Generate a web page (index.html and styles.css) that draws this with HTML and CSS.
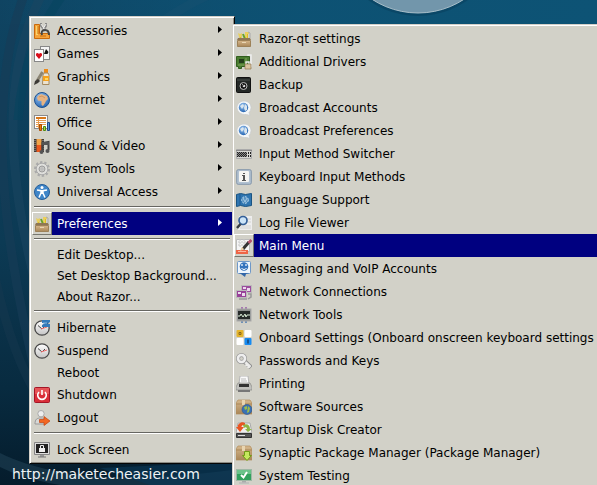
FILE: index.html
```
<!DOCTYPE html>
<html lang="en">
<head>
<meta charset="utf-8">
<title>Desktop menu</title>
<link rel="stylesheet" href="styles.css">
</head>
<body>
<svg class="defs" aria-hidden="true">
  <defs>
    <linearGradient id="sea" x1="0" y1="0" x2="0" y2="1"><stop offset="0" stop-color="#0f4462"/><stop offset=".5" stop-color="#0c3a54"/><stop offset=".8" stop-color="#082b40"/><stop offset="1" stop-color="#051c2c"/></linearGradient>
    <linearGradient id="glow" x1="0" y1="0" x2="1" y2="0"><stop offset="0" stop-color="#0b5a80" stop-opacity="0"/><stop offset=".5" stop-color="#0d5375" stop-opacity=".9"/><stop offset="1" stop-color="#0d5375"/></linearGradient>
    <linearGradient id="box" x1="0" y1="0" x2="0" y2="1"><stop offset="0" stop-color="#d6b78c"/><stop offset="1" stop-color="#a98658"/></linearGradient>
    <radialGradient id="blue" cx=".4" cy=".3" r=".75"><stop offset="0" stop-color="#9cc6f2"/><stop offset="1" stop-color="#1d5fae"/></radialGradient>
    <linearGradient id="pale" x1="0" y1="0" x2="0" y2="1"><stop offset="0" stop-color="#fff"/><stop offset="1" stop-color="#c4c4c4"/></linearGradient>
  </defs>
  <symbol id="accessories" viewBox="0 0 16 16"><path d="M.5 1.500h5v9h10v5H.5z" fill="#f5a33b" stroke="#c96a0c"/><path d="M2 3h2v9H2z" fill="#fbd36b"/><path d="M3 4h2M3 6h2M3 8h2M3 10h2M7 12v2M9 12v2M11 12v2" stroke="#c96a0c"/><path d="M7 0v3l4 5M12 0v3l-3 5" fill="none" stroke="#8a8a88" stroke-width="2"/><path d="M7 1l4 6M12 1l-3 5" stroke="#eee"/><path d="M8 12c-1-3 0-5 3-5s4 2 4 5" fill="none" stroke="#444" stroke-width="2"/></symbol>
  <symbol id="games" viewBox="0 0 16 16"><rect x="6.500" y=".5" width="9" height="13" fill="#f4f4f4" stroke="#888"/><path d="M12 3l2.500 3-1 2H10z" fill="#111"/><rect x=".5" y="3.500" width="9" height="12" fill="#fff" stroke="#888"/><path d="M5 13L2 9.500c-.5-3 2-3 3-1.500 1-1.500 3.500-1.500 3 1.500z" fill="#d9101c"/></symbol>
  <symbol id="graphics" viewBox="0 0 16 16"><path d="M10 0h4v4h-4z" fill="#ef8b16"/><path d="M9 6l1-2h4l1 2v9.500H8.500z" fill="#ece3d0" stroke="#a58a60"/><path d="M9 7h6v5H9z" fill="#f6a21c"/><path d="M11 9h3v2h-3z" fill="#ffd960"/><path d="M8.500 3L3 12" stroke="#8c8675" stroke-width="3"/><path d="M4 10l2 2-2 2-4 2 1-4z" fill="#3c3a36"/></symbol>
  <symbol id="internet" viewBox="0 0 16 16"><circle cx="8" cy="8" r="7.500" fill="url(#blue)" stroke="#1e5290"/><path d="M4 4l3-2 3 1 3 1 1 3-2 2-1 2-2 3-1.500-1V9L4 8.500 3 6z" fill="#e6b382"/><path d="M5 5l3-1 3 2" fill="none" stroke="#cf9560"/></symbol>
  <symbol id="office" viewBox="0 0 16 16"><rect x=".5" y=".5" width="13" height="13" fill="#fff" stroke="#8a8a8a"/><path d="M2 2h10v2H2z" fill="#d77819"/><path d="M2 5.500h10M2 7.500h10M2 9.500h10M2 11.500h6M4.500 4v9" stroke="#e59b50"/><path d="M5.500 9.500h2v6h-2z" fill="#f57900" stroke="#a64b00"/><path d="M9.500 11.500h2v4h-2z" fill="#a5d84a" stroke="#4e8a0e"/><path d="M13.500 7.500h2v8h-2z" fill="#5b94d6" stroke="#204a87"/></symbol>
  <symbol id="media" viewBox="0 0 16 16"><path d="M0 1h10v13H0z" fill="#403b37"/><path d="M2.500 1h5v6h-5z" fill="#f0a348"/><path d="M2.500 7h5v7h-5z" fill="#e9571c"/><path d="M1 2v12M9 2v12" stroke="#aaa" stroke-dasharray="1"/><path d="M8.500 13V5l6-1v8" fill="none" stroke="#444" stroke-width="2"/><path d="M8 4h7v3H8z" fill="#555"/><circle cx="7.500" cy="14" r="2" fill="#555"/><circle cx="13.500" cy="13" r="2" fill="#555"/></symbol>
  <symbol id="gear" viewBox="0 0 16 16"><circle cx="8" cy="8" r="6.700" fill="none" stroke="#aaa" stroke-width="2.500" stroke-dasharray="2.300 1.900"/><circle cx="8" cy="8" r="5.800" fill="#dfdfdc" stroke="#aaa"/><circle cx="8" cy="8" r="3" fill="#c9c9c6" stroke="#9b9b9b"/><circle cx="8" cy="8" r="1" fill="#eee" stroke="#888" stroke-width=".5"/></symbol>
  <symbol id="access" viewBox="0 0 16 16"><circle cx="8" cy="8" r="7.500" fill="#3f85c8" stroke="#245d98"/><circle cx="8" cy="3.500" r="1.500" fill="#fff"/><path d="M3 6l4 .7V9l-2 4.500M13 6l-4 .7V9l2 4.500M8 6v4" fill="none" stroke="#fff" stroke-width="1.500"/></symbol>
  <symbol id="toolbox" viewBox="0 0 16 16"><path d="M4.500 8V3M11 7V3" stroke="#e2bd21" stroke-width="2"/><path d="M2 2l2 1 2-1-1 4H3zM9 1h4v2h-2v4H9z" fill="#ead05c"/><path d="M12 1l2 1v5" fill="none" stroke="#aaa"/><path d="M7 3l2 5" stroke="#67a128" stroke-width="2"/><path d="M2 7h12l1 2H1z" fill="#8f7754"/><path d="M1.500 9.500h13v6h-13z" fill="url(#box)" stroke="#9d8158"/><path d="M6 11h4v1H6z" fill="#e9d6b4"/></symbol>
  <symbol id="driver" viewBox="0 0 16 16"><path d="M12 3V1h3v12" fill="none" stroke="#eee" stroke-width="1.500"/><path d="M.5 2.500h13v10h-8v2h-3v-2h-2z" fill="#4a7c30" stroke="#315f1d"/><path d="M3 5h5v4H3z" fill="#243d1b"/><path d="M2 11h6M10 4v3" stroke="#80a55c"/><path d="M10 10V8h3v2" fill="none" stroke="#eee" stroke-width="1.500"/><path d="M9 10h6v5H9z" fill="#d9c4a0" stroke="#927851" stroke-width=".7"/></symbol>
  <symbol id="safe" viewBox="0 0 16 16"><rect x=".5" y=".5" width="14" height="15" rx="1" fill="#242826" stroke="#111"/><path d="M1 3h13" stroke="#4b504c"/><circle cx="7.500" cy="9" r="3.500" fill="#111" stroke="#bbb"/><circle cx="8" cy="9" r="1.300" fill="#ddd"/><path d="M6 7l2 2" stroke="#999"/></symbol>
  <symbol id="broadcast" viewBox="0 0 16 16"><path d="M8 1c4.500 0 7 3 7 6.500 0 2-1 4-2 5l1 3-3.500-1C5 15 1 12 1 7.500 1 4 4 1 8 1z" fill="#f5f7f8" stroke="#c9cccd" stroke-width=".8"/><circle cx="7.500" cy="7.500" r="4.700" fill="url(#blue)"/><path d="M4 6l3-2 1 2-2 3zM9 4l2 2v4l-2 1-1-3z" fill="#dbe6ee"/></symbol>
  <symbol id="switcher" viewBox="0 0 16 16"><path d="M.5 3.500h15v9H.5z" fill="#d7d7d3" stroke="#aaa"/><path d="M0 4.500h16" stroke="#888"/><path d="M1 6h10v5H1z" fill="#888"/><path d="M1 6.500h10M2 7.500h9M1 8.500h10M2 9.500h9M1 10.500h10" stroke="#222" stroke-dasharray="1"/><path d="M12.500 6v5M14.500 6v5" stroke="#222" stroke-dasharray="2 1"/></symbol>
  <symbol id="key-i" viewBox="0 0 16 16"><rect x=".7" y=".7" width="14.600" height="14.600" rx="1.500" fill="#b2c2d2" stroke="#8497aa"/><rect x="3" y="2" width="10" height="11" rx="1" fill="#f5f5f2"/><path d="M7 4h2v1H7zM6 6h3v5h1v1H6v-1h1V7H6z" fill="#555"/></symbol>
  <symbol id="language" viewBox="0 0 16 16"><path d="M.5 2.500l4-1 5 1 6-1v12l-6 1-5-1-4 1z" fill="#2f75b0" stroke="#195382"/><path d="M4 2v11" stroke="#1e5b91"/><circle cx="9" cy="8" r="3.300" fill="#5590c0" stroke="#bdd9ed" stroke-dasharray="2 1"/><path d="M7 6l2 4 2-4" fill="none" stroke="#a3cae6"/></symbol>
  <symbol id="log" viewBox="0 0 16 16"><path d="M3 1h13v14H2z" fill="#eee"/><path d="M11 4h4M11 7h4M5 11h10M4 13h11" stroke="#d2d2d2"/><circle cx="7" cy="5.500" r="4" fill="#cce4f8" stroke="#345f98" stroke-width="1.700"/><path d="M4.500 9L1 13" stroke="#383c43" stroke-width="2.500"/></symbol>
  <symbol id="menu-edit" viewBox="0 0 16 16"><path d="M.5 1.500h13v12H.5z" fill="#f5f5f5" stroke="#bbb"/><path d="M2 4h10M2 7h8M4 1v9M8 1v9" stroke="#c6c6c6" stroke-dasharray="2 1"/><path d="M0 12h12v4H0z" fill="#ef6446"/><path d="M2 13.500h8" stroke="#fbb5a0"/><path d="M13 4l-6 7" stroke="#333" stroke-width="3"/><path d="M15.500 2l-3 3" stroke="#b4546c" stroke-width="3"/><path d="M6 9l2 2-4 2z" fill="#e8c798"/></symbol>
  <symbol id="message" viewBox="0 0 16 16"><rect x="1.500" y=".5" width="13" height="12" rx="1" fill="#eef5fc" stroke="#6f98c8"/><path d="M3 12h10l-3 1-1 3-4-3z" fill="#3266a8"/><circle cx="8" cy="5.500" r="4.300" fill="#3473bd"/><path d="M6 3v2M10 3v2" stroke="#fff" stroke-width="1.200"/><path d="M5.500 7c1 2 4 2 5 0" fill="none" stroke="#fff"/></symbol>
  <symbol id="network" viewBox="0 0 16 16"><path d="M5.500 1.500h10v7h-10z" fill="#9d4e9f" stroke="#bbb"/><path d="M7 3h3v2H7zM11 4h3v3h-3z" fill="#ecd8ed"/><path d="M.5 6.500h10v7H.5z" fill="#984199" stroke="#bbb"/><path d="M2 8h3v2H2zM6 9h3v3H6z" fill="#ecdced"/><path d="M3 15h8M12 10h3v3l-3 2" fill="none" stroke="#999" stroke-width="1.500"/></symbol>
  <symbol id="nettools" viewBox="0 0 16 16"><path d="M5 0h2v3H5zM9 0h2v3H9z" fill="#a779b1"/><path d="M5 13h2v3H5zM9 13h2v3H9z" fill="#6f91b7"/><rect x="1" y="2" width="14" height="12" fill="#8e918f" stroke="#aaa"/><path d="M2 4h12v8H2z" fill="#252a28"/><path d="M2 9h2l1-2 2 3 2-3 1 3 1-2h3" fill="none" stroke="#d7ead3"/></symbol>
  <symbol id="onboard" viewBox="0 0 16 16"><rect x=".5" y="0" width="7" height="7" rx="1" fill="#e5b52f"/><rect x="8.500" y="0" width="7" height="7" rx="1" fill="#fff"/><rect x=".5" y="8" width="7" height="7" rx="1" fill="#fff"/><rect x="8.500" y="8" width="7" height="7" rx="1" fill="#168bf2"/><path d="M3 2.500h2v2H3z" fill="none" stroke="#8b691a"/><path d="M11 9.500h2v4h-2z" fill="#165594"/></symbol>
  <symbol id="keys" viewBox="0 0 16 16"><path d="M8 8l7 6.500" stroke="#8e8e8e" stroke-width="4.500"/><path d="M8 8l6.500 6M11 11l-1 2M13 13l-1 2" stroke="#ececea" stroke-width="2.500"/><circle cx="5.500" cy="5.500" r="3.500" fill="none" stroke="#999" stroke-width="4"/><circle cx="5.500" cy="5.500" r="3.500" fill="none" stroke="#eee" stroke-width="2.600"/></symbol>
  <symbol id="printer" viewBox="0 0 16 16"><path d="M4 0h8l1 8H3z" fill="#fafafa" stroke="#b5b5b5"/><path d="M5 3h5M5 5h6" stroke="#bbb"/><path d="M2 7h12l2 4v3H0v-3z" fill="#c1c1bd" stroke="#8a8a86" stroke-width=".7"/><path d="M3 8h10v3H3z" fill="#333"/><path d="M2 14h12v2H2z" fill="#777"/></symbol>
  <symbol id="software" viewBox="0 0 16 16"><path d="M2 1h12l2 3v11H0V4z" fill="url(#box)" stroke="#b18c5b" stroke-width=".7"/><path d="M0 5h16" stroke="#a98658"/><path d="M6 1h3v5H6z" fill="#e8d4b0"/><circle cx="11" cy="10.500" r="5" fill="#3971b4" stroke="#2b568f" stroke-width=".6"/><path d="M8 8l3-1v3l-2 1zM12 7l2 2-1 4-2 1z" fill="#9dbd4b"/></symbol>
  <symbol id="startup" viewBox="0 0 16 16"><path d="M2 1h12l2 10H0z" fill="#eee" stroke="#aaa"/><path d="M.5 11.500h15v4H.5z" fill="#555" stroke="#333"/><path d="M2 13.500h7" stroke="#ddd"/><path d="M9 1C6-1 1 2 2 5H0l4 5 4-5H5.500c0-2 2-2 3.500-1z" fill="#e95521"/><path d="M7 3c4-2 7 0 7 4h2l-4 3-3-3h2c0-2-2-2-3-1z" fill="#8db542"/></symbol>
  <symbol id="synaptic" viewBox="0 0 16 16"><path d="M2 1h12l2 3v11H0V4z" fill="url(#box)" stroke="#b18c5b" stroke-width=".7"/><path d="M0 5h16" stroke="#a98658"/><path d="M6 1h3v5H6z" fill="#e8d4b0"/><path d="M8.500 6.500h5v4h2L11 15.500 6.500 10.500h2z" fill="#c5e85d" stroke="#719a16"/></symbol>
  <symbol id="testing" viewBox="0 0 16 16"><path d="M6 12h4v3H6z" fill="#aaa"/><path d="M3 15h10" stroke="#bbb" stroke-width="1.500"/><rect x=".5" y="1.500" width="15" height="11" fill="#32a15d" stroke="#9fb8a6"/><path d="M1 2h14v4H1z" fill="#6bc38a"/><path d="M5 7l2.500 2.500L11 4" fill="none" stroke="#fff" stroke-width="2"/></symbol>
  <symbol id="clock" viewBox="0 0 16 16"><circle cx="8" cy="8" r="7.200" fill="url(#pale)" stroke="#484848" stroke-width="1.300"/><path d="M4 5.500l4 3.500 3-3" fill="none" stroke="#444"/><path d="M7 9l6-2" stroke="#ef6b6b"/></symbol>
  <symbol id="hibernate" viewBox="0 0 16 16"><use href="#clock"/><path d="M8 0h8v2l-3 2h3v3H8V5l3-2H8z" fill="#347ab9"/><path d="M9 3h4" stroke="#80b2dc"/></symbol>
  <symbol id="shutdown" viewBox="0 0 16 16"><rect x=".5" y=".5" width="15" height="15" rx="1" fill="#d92e38" stroke="#a31626"/><path d="M1 1h14v6H1z" fill="#ed6869" opacity=".65"/><path d="M5 5a4.300 4.300 0 1 0 6 0M8 3v5" fill="none" stroke="#fff" stroke-width="1.600"/></symbol>
  <symbol id="logout" viewBox="0 0 16 16"><path d="M1 14c0-5 2-6 6-6s5 2 5 6z" fill="#d8d8d6" stroke="#999"/><circle cx="7" cy="3.700" r="3.200" fill="#eee" stroke="#aaa"/><path d="M5.500 9.500H10V6.500l6 4.500-6 4.500v-3H5.500z" fill="#f26722" stroke="#c6430d" stroke-width=".7"/></symbol>
  <symbol id="lock" viewBox="0 0 16 16"><path d="M.5.500h15v12H.5z" fill="#ddd" stroke="#858585"/><path d="M2 2h12v9H2z" fill="#222"/><path d="M6.500 6V3.500h3V6" fill="none" stroke="#eee"/><path d="M5 6h6v4H5z" fill="#eee"/><path d="M6 13h4v2H6z" fill="#999"/><path d="M4 15h8" stroke="#777"/></symbol>
  <symbol id="arrow" viewBox="0 0 4 7"><path d="M0 0l4 3.500L0 7z" fill="currentColor"/></symbol>
</svg>

<main class="desktop">
  <svg class="wallpaper" viewBox="0 0 597 485" preserveAspectRatio="xMinYMin slice" aria-hidden="true">
    <rect width="597" height="485" fill="url(#sea)"/>
    <rect width="597" height="24" fill="url(#glow)"/>
    <g fill="none" stroke-width="9">
      <path d="M44-10C12 50-4 140 40 300" stroke="#1c4660" opacity=".55"/>
      <path d="M26-10C-2 60-14 180 40 390" stroke="#173c57" opacity=".6"/>
      <path d="M66-10C44 20 22 60 18 120" stroke="#04445e" opacity=".5"/>
      <path d="M-10 250C0 310 15 360 40 400" stroke="#183a50" opacity=".4"/>
      <path d="M150 30C180 8 200-2 220-10" stroke="#16506f" opacity=".5"/>
    </g>
    <path d="M-2 452C50 478 120 484 232 470L232 485H60C30 480 10 472-2 466z" fill="#24455a" opacity=".5"/>
    <path d="M100 468l132-6v23H150z" fill="#0a3858" opacity=".6"/>
    <circle cx="418" cy="-70" r="86" fill="#06354f" opacity=".35"/>
    <circle cx="418" cy="-71" r="84" fill="#7296ab" stroke="#a9bfca"/>
  </svg>
  <p class="credit">http://maketecheasier.com</p>

  <nav class="menu menu-main" aria-label="Applications">
    <button class="item"><svg class="icon"><use href="#accessories"/></svg><span class="label">Accessories</span><svg class="arrow"><use href="#arrow"/></svg></button>
    <button class="item"><svg class="icon"><use href="#games"/></svg><span class="label">Games</span><svg class="arrow"><use href="#arrow"/></svg></button>
    <button class="item"><svg class="icon"><use href="#graphics"/></svg><span class="label">Graphics</span><svg class="arrow"><use href="#arrow"/></svg></button>
    <button class="item"><svg class="icon"><use href="#internet"/></svg><span class="label">Internet</span><svg class="arrow"><use href="#arrow"/></svg></button>
    <button class="item"><svg class="icon"><use href="#office"/></svg><span class="label">Office</span><svg class="arrow"><use href="#arrow"/></svg></button>
    <button class="item"><svg class="icon"><use href="#media"/></svg><span class="label">Sound &amp; Video</span><svg class="arrow"><use href="#arrow"/></svg></button>
    <button class="item"><svg class="icon"><use href="#gear"/></svg><span class="label">System Tools</span><svg class="arrow"><use href="#arrow"/></svg></button>
    <button class="item"><svg class="icon"><use href="#access"/></svg><span class="label">Universal Access</span><svg class="arrow"><use href="#arrow"/></svg></button>
    <hr class="rule">
    <button class="item active"><svg class="icon"><use href="#toolbox"/></svg><span class="label">Preferences</span><svg class="arrow"><use href="#arrow"/></svg></button>
    <hr class="rule">
    <button class="item plain"><span class="label">Edit Desktop...</span></button>
    <button class="item plain"><span class="label">Set Desktop Background...</span></button>
    <button class="item plain"><span class="label">About Razor...</span></button>
    <hr class="rule">
    <button class="item"><svg class="icon"><use href="#hibernate"/></svg><span class="label">Hibernate</span></button>
    <button class="item"><svg class="icon"><use href="#clock"/></svg><span class="label">Suspend</span></button>
    <button class="item plain"><span class="label">Reboot</span></button>
    <button class="item"><svg class="icon"><use href="#shutdown"/></svg><span class="label">Shutdown</span></button>
    <button class="item"><svg class="icon"><use href="#logout"/></svg><span class="label">Logout</span></button>
    <hr class="rule">
    <button class="item"><svg class="icon"><use href="#lock"/></svg><span class="label">Lock Screen</span></button>
  </nav>

  <nav class="menu menu-sub" aria-label="Preferences">
    <button class="item"><svg class="icon"><use href="#toolbox"/></svg><span class="label">Razor-qt settings</span></button>
    <button class="item"><svg class="icon"><use href="#driver"/></svg><span class="label">Additional Drivers</span></button>
    <button class="item"><svg class="icon"><use href="#safe"/></svg><span class="label">Backup</span></button>
    <button class="item"><svg class="icon"><use href="#broadcast"/></svg><span class="label">Broadcast Accounts</span></button>
    <button class="item"><svg class="icon"><use href="#broadcast"/></svg><span class="label">Broadcast Preferences</span></button>
    <button class="item"><svg class="icon"><use href="#switcher"/></svg><span class="label">Input Method Switcher</span></button>
    <button class="item"><svg class="icon"><use href="#key-i"/></svg><span class="label">Keyboard Input Methods</span></button>
    <button class="item"><svg class="icon"><use href="#language"/></svg><span class="label">Language Support</span></button>
    <button class="item"><svg class="icon"><use href="#log"/></svg><span class="label">Log File Viewer</span></button>
    <button class="item active"><svg class="icon"><use href="#menu-edit"/></svg><span class="label">Main Menu</span></button>
    <button class="item"><svg class="icon"><use href="#message"/></svg><span class="label">Messaging and VoIP Accounts</span></button>
    <button class="item"><svg class="icon"><use href="#network"/></svg><span class="label">Network Connections</span></button>
    <button class="item"><svg class="icon"><use href="#nettools"/></svg><span class="label">Network Tools</span></button>
    <button class="item"><svg class="icon"><use href="#onboard"/></svg><span class="label">Onboard Settings (Onboard onscreen keyboard settings</span></button>
    <button class="item"><svg class="icon"><use href="#keys"/></svg><span class="label">Passwords and Keys</span></button>
    <button class="item"><svg class="icon"><use href="#printer"/></svg><span class="label">Printing</span></button>
    <button class="item"><svg class="icon"><use href="#software"/></svg><span class="label">Software Sources</span></button>
    <button class="item"><svg class="icon"><use href="#startup"/></svg><span class="label">Startup Disk Creator</span></button>
    <button class="item"><svg class="icon"><use href="#synaptic"/></svg><span class="label">Synaptic Package Manager (Package Manager)</span></button>
    <button class="item"><svg class="icon"><use href="#testing"/></svg><span class="label">System Testing</span></button>
  </nav>
</main>
</body>
</html>
```
FILE: styles.css
```
* { box-sizing: border-box; }

body {
  margin: 0;
  font-family: "DejaVu Sans", sans-serif;
  font-size: 12px;
  color: #000;
}

.defs { position: absolute; width: 0; height: 0; }

.desktop {
  position: relative;
  height: 100vh;
  overflow: hidden;
  background: #082b40;
}

.wallpaper {
  position: absolute;
  inset: 0;
  width: 100%;
  height: 100%;
}

.credit {
  position: absolute;
  left: 12px;
  bottom: 2px;
  margin: 0;
  font-size: 14px;
  line-height: 18px;
  color: #eef2f4;
}

/* Floating menus with a raised bevel */
.menu {
  position: absolute;
  display: flex;
  flex-direction: column;
  background: #d2d1c8;
  border: 1px solid;
  border-color: #d4d0c8 #050505 #050505 #d4d0c8;
  box-shadow: inset 1px 1px #fff, inset -1px -1px #8b8b84;
}

.menu-main { left: 29px; top: 16px; padding: 2px; min-width: 206px; }
.menu-sub { left: 232px; top: 24px; padding: 2px 1px; min-width: calc(100% - 230px); }

.item {
  display: flex;
  align-items: center;
  height: 23px;
  padding: 0;
  border: 0;
  background: none;
  color: inherit;
  font: inherit;
  text-align: left;
  white-space: nowrap;
}

.icon {
  flex: none;
  width: 20px;
  height: 23px;
  padding: 3px 1px 2px;
  border: 1px solid transparent;
}

.label { flex: 1; padding: 2px 5px 0; line-height: 19px; }

.arrow {
  flex: none;
  width: 4px;
  height: 7px;
  margin: 0 10px 2px 0;
}

.plain { height: 21px; padding-left: 20px; }

.active {
  color: #fff;
  background: linear-gradient(90deg, #d2d1c8 20px, #000080 20px);
}

.active .icon { border-color: #fff #77776f #77776f #fff; }

.rule {
  width: calc(100% - 4px);
  height: 2px;
  margin: 3px 2px 4px;
  border: 0;
  border-top: 1px solid #666661;
  border-bottom: 1px solid #fff;
}
```
